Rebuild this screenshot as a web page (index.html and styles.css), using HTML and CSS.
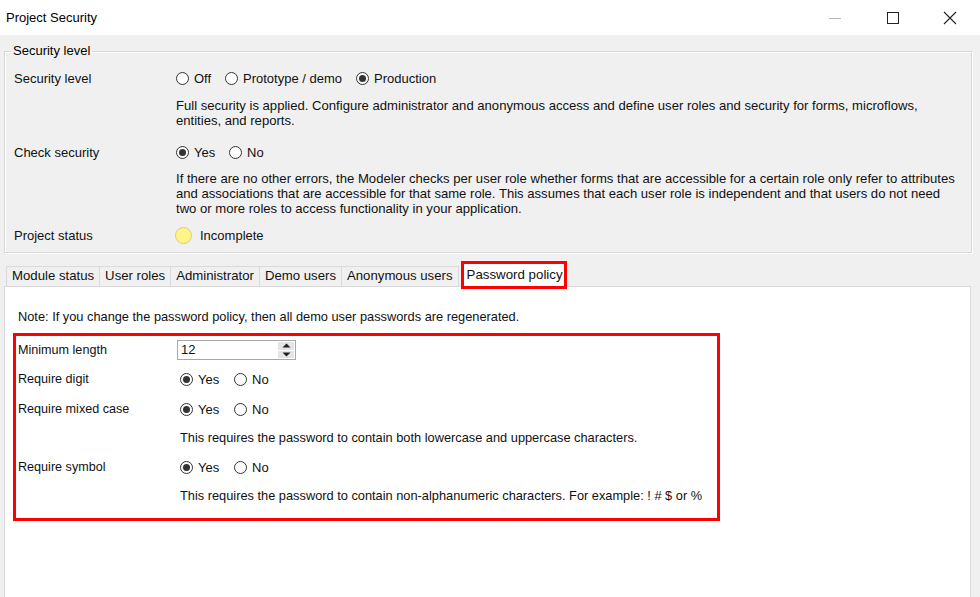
FILE: index.html
```html
<!DOCTYPE html>
<html>
<head>
<meta charset="utf-8">
<title>Project Security</title>
<link rel="stylesheet" href="styles.css">
</head>
<body>
<div class="window">
  <header class="titlebar">
    <span class="title">Project Security</span>
    <div class="controls">
      <span class="ctl ctl-min"><svg width="14" height="14" viewBox="0 0 14 14"><line x1="1" y1="7.5" x2="13" y2="7.5" stroke="#b8b8b8" stroke-width="1"/></svg></span>
      <span class="ctl ctl-max"><svg width="14" height="14" viewBox="0 0 14 14"><rect x="1.5" y="1.5" width="11" height="11" fill="none" stroke="#222" stroke-width="1"/></svg></span>
      <span class="ctl ctl-close"><svg width="14" height="14" viewBox="0 0 14 14"><path d="M1 1 L13 13 M13 1 L1 13" stroke="#222" stroke-width="1.1" fill="none"/></svg></span>
    </div>
  </header>

  <main class="content">
    <fieldset class="group">
      <legend class="group-title">Security level</legend>

      <div class="row r-level">
        <span class="label">Security level</span>
        <div class="options">
          <label class="opt opt-off"><span class="radio"></span>Off</label>
          <label class="opt opt-proto"><span class="radio"></span>Prototype / demo</label>
          <label class="opt"><span class="radio checked"></span>Production</label>
        </div>
      </div>
      <p class="desc d-level">Full security is applied. Configure administrator and anonymous access and define user roles and security for forms, microflows,<br>entities, and reports.</p>

      <div class="row r-check">
        <span class="label">Check security</span>
        <div class="options">
          <label class="opt opt-yes"><span class="radio checked"></span>Yes</label>
          <label class="opt"><span class="radio"></span>No</label>
        </div>
      </div>
      <p class="desc d-check">If there are no other errors, the Modeler checks per user role whether forms that are accessible for a certain role only refer to attributes<br>and associations that are accessible for that same role. This assumes that each user role is independent and that users do not need<br>two or more roles to access functionality in your application.</p>

      <div class="row r-status">
        <span class="label">Project status</span>
        <div class="options">
          <span class="status-dot"></span><span class="status-text">Incomplete</span>
        </div>
      </div>
    </fieldset>

    <nav class="tabs">
      <span class="tab">Module status</span>
      <span class="tab">User roles</span>
      <span class="tab">Administrator</span>
      <span class="tab">Demo users</span>
      <span class="tab">Anonymous users</span>
      <span class="tab tab-active">Password policy</span>
    </nav>

    <section class="panel">
      <p class="note">Note: If you change the password policy, then all demo user passwords are regenerated.</p>
      <div class="highlight">
        <div class="prow p-min">
          <span class="plabel">Minimum length</span>
          <div class="spinner">
            <span class="spin-value">12</span>
            <span class="spin-buttons">
              <span class="spin-btn"><svg width="9" height="5" viewBox="0 0 9 5"><path d="M0.5 4.5 L4.5 0.5 L8.5 4.5 Z" fill="#222"/></svg></span>
              <span class="spin-btn"><svg width="9" height="5" viewBox="0 0 9 5"><path d="M0.5 0.5 L4.5 4.5 L8.5 0.5 Z" fill="#222"/></svg></span>
            </span>
          </div>
        </div>
        <div class="prow p-digit">
          <span class="plabel">Require digit</span>
          <div class="options">
            <label class="opt opt-pyes"><span class="radio checked"></span>Yes</label>
            <label class="opt"><span class="radio"></span>No</label>
          </div>
        </div>
        <div class="prow p-mixed">
          <span class="plabel">Require mixed case</span>
          <div class="options">
            <label class="opt opt-pyes"><span class="radio checked"></span>Yes</label>
            <label class="opt"><span class="radio"></span>No</label>
          </div>
        </div>
        <p class="pdesc pd-mixed">This requires the password to contain both lowercase and uppercase characters.</p>
        <div class="prow p-symbol">
          <span class="plabel">Require symbol</span>
          <div class="options">
            <label class="opt opt-pyes"><span class="radio checked"></span>Yes</label>
            <label class="opt"><span class="radio"></span>No</label>
          </div>
        </div>
        <p class="pdesc pd-symbol">This requires the password to contain non-alphanumeric characters. For example: ! # $ or %</p>
      </div>
    </section>
  </main>
</div>
</body>
</html>
```

FILE: styles.css
```css
* { box-sizing: border-box; }

html, body {
  margin: 0;
  padding: 0;
  height: 100%;
  overflow: hidden;
}

body {
  background: #f0f0f0;
  font-family: "Liberation Sans", Arial, sans-serif;
  font-size: 13px;
  color: #111;
}

.window {
  width: 980px;
  height: 597px;
  overflow: hidden;
}

/* title bar */
.titlebar {
  height: 35px;
  background: #fff;
  display: flex;
  align-items: center;
  justify-content: space-between;
}

.title {
  padding-left: 6px;
  font-size: 13px;
  color: #000;
  margin-top: -1px;
}

.controls {
  display: flex;
  align-items: center;
  height: 100%;
}

.ctl {
  display: flex;
  align-items: center;
  justify-content: center;
  width: 56px;
  height: 100%;
}

.ctl-min { margin-right: 2px; }
.ctl-max { width: 56px; }
.ctl-close { width: 58px; margin-right: 1px; }

/* group box */
.content {
  display: flex;
  flex-direction: column;
}

.group {
  margin: 8px 8px 0 4px;
  padding: 0 9px 7px 9px;
  border: 1px solid #d8d8d8;
  box-shadow: inset 1px 1px 0 #fff, 1px 1px 0 #fff;
  min-width: 0;
}

.group-title {
  padding: 0 2px;
  margin-left: -3px;
  line-height: 16px;
  color: #000;
}

.row {
  display: flex;
  align-items: center;
  height: 20px;
}

.label {
  width: 162px;
  flex: none;
}

.r-level { margin-top: 9px; }
.r-check { margin-top: 14px; }
.r-status { margin-top: 9px; }

.options {
  display: flex;
  align-items: center;
}

.opt {
  display: flex;
  align-items: center;
  white-space: nowrap;
}

.opt-off { width: 49px; }
.opt-proto { width: 131px; }
.opt-yes { width: 53px; }
.opt-pyes { width: 54px; }

.radio {
  width: 13px;
  height: 13px;
  border: 1px solid #333;
  border-radius: 50%;
  background: #fff;
  margin-right: 5px;
  display: flex;
  align-items: center;
  justify-content: center;
  flex: none;
}

.radio.checked::after {
  content: "";
  width: 7px;
  height: 7px;
  border-radius: 50%;
  background: #333;
}

.desc {
  margin: 0 0 0 162px;
  line-height: 15px;
  white-space: nowrap;
  font-size: 13.1px;
}

.d-level { margin-top: 10px; }
.d-check { margin-top: 9px; }

.status-dot {
  width: 17px;
  height: 17px;
  border-radius: 50%;
  background: #fff48a;
  border: 1px solid #e3cf58;
  margin-left: -1px;
  margin-right: 8px;
}

/* tabs */
.tabs {
  display: flex;
  align-items: flex-end;
  margin: 6px 0 0 6px;
  height: 27px;
}

.tab {
  height: 20px;
  line-height: 18px;
  padding: 0 5px;
  border: 1px solid #dadada;
  border-bottom: none;
  margin-right: -1px;
  background: #f0f0f0;
  white-space: nowrap;
  font-size: 13.2px;
}

.tab-active {
  position: relative;
  z-index: 1;
  height: 28px;
  line-height: 22px;
  padding: 0 1px 0 3px;
  border: 3px solid #ff0000;
  background: #fff;
  margin-left: 3px;
  margin-bottom: -3px;
  font-size: 13.3px;
}

/* panel */
.panel {
  margin: 0 9px 0 4px;
  height: 330px;
  background: #fff;
  border: 1px solid #dadada;
  padding: 22px 0 0 8px;
}

.note {
  margin: 0 0 0 5px;
  line-height: 15px;
  font-size: 12.8px;
  white-space: nowrap;
}

.highlight {
  margin-top: 9px;
  width: 707px;
  height: 188px;
  border: 3px solid #ff0000;
  padding: 3px 0 0 2px;
}

.prow {
  display: flex;
  align-items: center;
  height: 22px;
}

.plabel {
  width: 159px;
  flex: none;
  font-size: 12.6px;
}

.p-digit { margin-top: 7px; }
.p-mixed { margin-top: 8px; }
.p-symbol { margin-top: 11px; }

.pdesc {
  margin: 0 0 0 162px;
  line-height: 15px;
  font-size: 12.8px;
  white-space: nowrap;
}

.pd-mixed { margin-top: 10px; }
.pd-symbol { margin-top: 10px; }

.p-digit .options,
.p-mixed .options,
.p-symbol .options { margin-left: 3px; }

/* spinner */
.spinner {
  width: 119px;
  height: 20px;
  border: 1px solid #a8a8a8;
  display: flex;
  align-items: stretch;
  justify-content: space-between;
  background: #fff;
}

.spin-value {
  padding-left: 3px;
  line-height: 18px;
}

.spin-buttons {
  display: flex;
  flex-direction: column;
  width: 17px;
  gap: 1px;
  padding: 1px 1px 1px 0;
}

.spin-btn {
  flex: 1;
  background: #e5e5e5;
  display: flex;
  align-items: center;
  justify-content: center;
}
```
